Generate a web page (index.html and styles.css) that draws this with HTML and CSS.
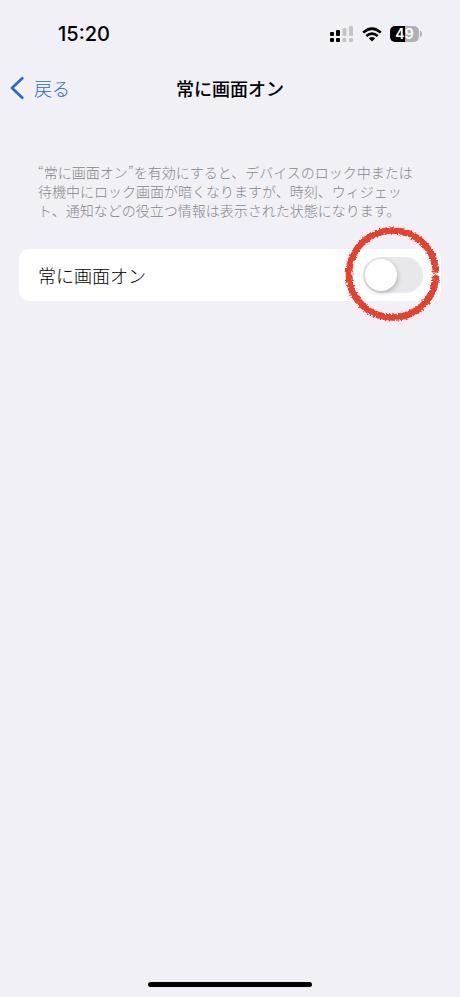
FILE: index.html
```html
<!DOCTYPE html>
<html lang="ja">
<head>
<meta charset="utf-8">
<meta name="viewport" content="width=device-width, initial-scale=1">
<title>常に画面オン</title>
<link rel="stylesheet" href="styles.css">
</head>
<body>
<div class="screen">
  <div class="status">
    <span class="clock">15:20</span>
    <div class="indicators">
      <svg class="signal" width="24" height="18" viewBox="0 0 24 18" aria-hidden="true">
        <g fill="#000"><rect x="0" y="7" width="4" height="4" rx="1"/><rect x="6" y="5" width="4" height="6" rx="1"/><rect x="0" y="13" width="4" height="4" rx="1"/><rect x="6" y="13" width="4" height="4" rx="1"/></g>
        <g fill="#c4c4c8"><rect x="12.500" y="3" width="4" height="8" rx="1"/><rect x="19" y="1" width="4" height="10" rx="1"/><rect x="12.500" y="13" width="4" height="4" rx="1"/><rect x="19" y="13" width="4" height="4" rx="1"/></g>
      </svg>
      <svg class="wifi" width="20" height="15" viewBox="0 0 20 15" aria-hidden="true">
        <g fill="none" stroke="#000" stroke-width="2.600"><path d="M1.200 5.600Q10 -2.200 18.800 5.600"/><path d="M4.300 9Q10 4.200 15.700 9"/></g>
        <path d="M6.800 11.200Q10 8.700 13.200 11.200L10 14.500Z"/>
      </svg>
      <div class="battery"><span class="level">49</span></div>
    </div>
  </div>
  <header class="nav">
    <a class="back" href="#">
      <svg width="14" height="24" viewBox="0 0 14 24" aria-hidden="true"><path d="M12.300 2.200 2 12l10.300 9.800" fill="none" stroke="#2569d0" stroke-width="2.600" stroke-linecap="round" stroke-linejoin="round"/></svg>
      <span>戻る</span>
    </a>
    <h1>常に画面オン</h1>
  </header>
  <main>
    <p class="note" id="note">“常に画面オン”を有効にすると、デバイスのロック中または待機中にロック画面が暗くなりますが、時刻、ウィジェット、通知などの役立つ情報は表示された状態になります。</p>
    <div class="row">
      <label for="always-on">常に画面オン</label>
      <div class="control">
        <input class="switch" id="always-on" type="checkbox" role="switch" aria-describedby="note">
        <svg class="marker" width="100" height="100" viewBox="0 0 100 100" aria-hidden="true">
          <defs><filter id="rough" x="-10%" y="-10%" width="120%" height="120%" color-interpolation-filters="sRGB"><feTurbulence type="fractalNoise" baseFrequency="0.5" numOctaves="2" seed="4" result="n"/><feDisplacementMap in="SourceGraphic" in2="n" scale="5" xChannelSelector="R" yChannelSelector="G"/></filter></defs>
          <circle cx="49.500" cy="49" r="43.500" fill="none" stroke="#e8402a" stroke-width="6.600" pathLength="360" stroke-dasharray="356 4" stroke-dashoffset="-2" filter="url(#rough)"/>
        </svg>
      </div>
    </div>
  </main>
  <div class="home"></div>
</div>
</body>
</html>
```
FILE: styles.css
```css
* { box-sizing: border-box; }
body {
  margin: 0;
  background: #f1f0f6;
  color: #000;
  font-family: Inter, "Noto Sans CJK JP", sans-serif;
}
.screen {
  display: flex;
  flex-direction: column;
  min-height: 100vh;
}
.status {
  display: flex;
  align-items: center;
  justify-content: space-between;
  height: 68px;
  padding: 0 38px 0 58px;
}
.clock {
  font-size: 20px;
  font-weight: 500;
}
.indicators {
  display: flex;
  align-items: center;
  gap: 8px;
}
.battery {
  position: relative;
  width: 29px;
  height: 16px;
  margin-right: 3px;
  border-radius: 5px;
  background: linear-gradient(90deg, #000 50%, #b1b0b6 50%);
  text-align: center;
}
.battery::after {
  content: "";
  position: absolute;
  top: 5px;
  right: -3px;
  width: 2px;
  height: 6px;
  border-radius: 0 2px 2px 0;
  background: #b1b0b6;
}
.level {
  display: block;
  color: #fff;
  font-size: 14px;
  font-weight: 600;
  line-height: 16px;
}
.nav {
  display: grid;
  grid-template-columns: 1fr auto 1fr;
  align-items: center;
  height: 40px;
  padding: 0 10px;
}
.back {
  display: flex;
  align-items: center;
  gap: 10px;
  color: #2569d0;
  font-size: 18px;
  font-weight: 300;
  text-decoration: none;
}
.nav h1 {
  margin: 0;
  font-size: 18px;
  font-weight: 500;
}
main {
  flex: 1;
  padding: 55px 19px 0;
}
.note {
  margin: 0;
  padding: 0 19px;
  color: #86868b;
  font-family: "Noto Sans CJK JP", sans-serif;
  font-size: 14px;
  font-weight: 300;
  line-height: 19px;
}
.row {
  display: flex;
  align-items: center;
  justify-content: space-between;
  height: 52px;
  margin-top: 29px;
  padding: 0 18px 0 19px;
  border-radius: 10px;
  background: #fff;
}
.row label {
  font-size: 18px;
  font-weight: 300;
}
.control {
  position: relative;
  display: flex;
}
.switch {
  appearance: none;
  width: 60px;
  height: 36px;
  margin: 0;
  padding: 2px;
  border-radius: 18px;
  background: #e8e8ea;
}
.switch::before {
  content: "";
  display: block;
  width: 32px;
  height: 32px;
  border-radius: 50%;
  background: #fff;
  box-shadow: 1px 2px 5px rgba(0, 0, 0, 0.22);
}
.switch:checked { background: #34c759; }
.switch:checked::before { margin-left: 24px; }
.marker {
  position: absolute;
  top: -32px;
  left: -20px;
  pointer-events: none;
}
.home {
  align-self: center;
  width: 164px;
  height: 5px;
  margin-bottom: 10px;
  border-radius: 3px;
  background: #000;
}
```
